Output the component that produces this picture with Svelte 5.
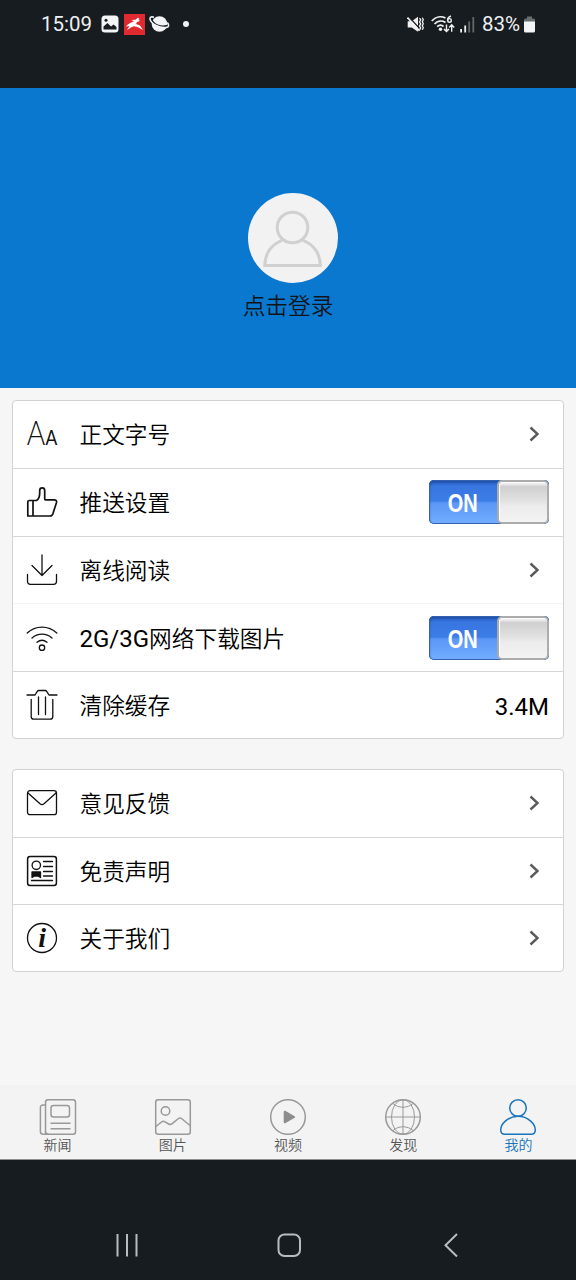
<script>
  let push = true;
  let mobileImages = true;
  let active = "me";

  const cacheSize = "3.4M";

  const groups = [
    [
      { icon: "font", text: "正文字号" },
      { icon: "thumb", text: "推送设置", toggle: "push" },
      { icon: "download", text: "离线阅读", faint: true },
      { icon: "wifi", prefix: "2G/3G", text: "网络下载图片", toggle: "images" },
      { icon: "trash", text: "清除缓存", value: cacheSize },
    ],
    [
      { icon: "mail", text: "意见反馈" },
      { icon: "card", text: "免责声明" },
      { icon: "info", text: "关于我们" },
    ],
  ];

  const tabs = [
    { key: "news", text: "新闻" },
    { key: "photo", text: "图片" },
    { key: "video", text: "视频" },
    { key: "find", text: "发现" },
    { key: "me", text: "我的" },
  ];

  $: states = { push, images: mobileImages };

  function flip(name) {
    if (name == "push") push = !push;
    else mobileImages = !mobileImages;
  }
</script>

<div class="phone">
  <div class="status">
    <div class="status-left">
      <span class="time">15:09</span>
      <svg class="gallery" width="18" height="18" viewBox="0 0 18 18">
        <rect x="0.5" y="0.5" width="17" height="17" rx="3.5" fill="#f2f4f5" />
        <path d="M2.5 14.500V11.500L6.500 8l3.500 3.500 2.500-2 3 2.500v2.500z" fill="#171c20" />
        <circle cx="5" cy="5.2" r="1.500" fill="#171c20" />
      </svg>
      <svg class="red" width="21" height="21" viewBox="0 0 21 21">
        <rect width="21" height="21" fill="#e12a30" />
        <path
          d="M2 12.500C4.500 9.500 7 8.200 10 7.500L7.500 6l4-.2L14 3.500l1.500 1.500-1 1 1.500 1-3 1-1 2 4 1.500 3 4.500-5.500-3-4-.8L7 13.500 3 16l2.500-4z"
          fill="#fff"
        />
      </svg>
      <svg class="planet" width="21" height="18" viewBox="0 0 21 18">
        <circle cx="10.500" cy="9" r="7.800" fill="#f2f4f5" />
        <path d="M2.500 4C4 9.500 12 13 18.500 10.500" stroke="#171c20" stroke-width="1.500" fill="none" />
        <path
          d="M5 2.200C2.500 1.500.8 2 1 4c.7 5 10 9.500 16.500 8.500 2.500-.4 2.700-2.500.8-5"
          stroke="#f2f4f5"
          stroke-width="1.600"
          fill="none"
        />
      </svg>
      <span class="dot"></span>
    </div>
    <div class="status-right">
      <svg width="17" height="17" viewBox="0 0 17 17" fill="none" stroke="#eef0f1" stroke-width="1.600">
        <path d="M.7 5.200h4L11 .8v15L4.700 11.500h-4z" fill="#eef0f1" stroke="none" />
        <path d="M1.500.5 13 13" stroke="#171c20" stroke-width="1.300" />
        <path d="M.5 1.500 12.500 14.800" />
        <path d="M12.500 2.200l1.200 1.700-1.200 2 1.200 2-1.200 2 1.200 2-1.200 2M15.300 1.700l1 2-1 2 1 2-1 2 1 2-1 2" stroke-width="1.300" />
      </svg>
      <svg class="wave" width="24" height="18" viewBox="0 0 24 18" fill="none" stroke="#eef0f1" stroke-width="1.800">
        <path d="M.8 6C4.500 1.800 10 .9 14.500 3M3.500 9c3-3.200 7.500-3.700 11-1.500M6.200 11.700c2-1.800 4.600-1.800 6.300-.2" />
        <circle cx="9.500" cy="14.200" r="1.700" fill="#eef0f1" stroke="none" />
        <path d="M20 1c-2.700 1-3.600 3-3.400 4.600" stroke-width="1.400" />
        <circle cx="18.500" cy="5.400" r="1.800" stroke-width="1.400" />
        <path d="M15.500 9.500v7M13 14l2.500 2.600 2.500-2.600M20.700 16.800V10M18.200 12.400l2.500-2.600 2.500 2.600" stroke-width="1.400" />
      </svg>
      <svg class="signal" width="15" height="17" viewBox="0 0 15 17">
        <path d="M.2 13h1.800v3.500H.2zM4.300 9.500h1.800v7H4.300z" fill="#eef0f1" />
        <path d="M8.300 5.500h1.800v11H8.300zM12.400 1h1.800v15.500h-1.800z" fill="#62676a" />
      </svg>
      <span class="percent">83%</span>
      <svg width="11" height="17" viewBox="0 0 11 17">
        <path d="M3 .5h5v2h1.500A1.500 1.500 0 0 1 11 4v3H0V4a1.500 1.500 0 0 1 1.500-1.500H3z" fill="#686d70" />
        <path d="M0 5.500h11v9.500a1.500 1.500 0 0 1-1.500 1.500h-8A1.500 1.500 0 0 1 0 15z" fill="#f2f4f5" />
      </svg>
    </div>
  </div>

  <div class="hero">
    <div class="avatar">
      <svg width="90" height="90" viewBox="0 0 90 90" fill="none" stroke="#d0d0d0" stroke-width="3">
        <circle cx="44.500" cy="34.500" r="15.300" />
        <path d="M34 47.300C23 51.500 16.800 61 16.800 72.500h55.500C72.300 61 66 51.500 55 47.300" />
      </svg>
    </div>
    <div class="login">点击登录</div>
  </div>

  <div class="content">
    {#each groups as group}
      <div class="group">
        {#each group as item}
          <div class="row" class:faint={item.faint}>
            <svg class="icon" width="32" height="32" viewBox="0 0 32 32">
              {#if item.icon == "font"}
                <text x="0.800" y="27.300" font-size="33" textLength="18.500" lengthAdjust="spacingAndGlyphs">A</text>
                <text class="small" x="19.400" y="27.300" font-size="21" textLength="11.800" lengthAdjust="spacingAndGlyphs">A</text>
              {:else if item.icon == "thumb"}
                <path
                  d="M7 14.500h3.500c2.500-1.500 3.200-4.500 3.200-7.500V4.500c0-3.500 5-3.500 5 0v8.300c0 .6.400 1 1 1h8.500c1.700 0 2.700 1 2.300 2.700L27 27.500c-.4 1.500-1.200 2.500-3 2.500H1.800V16c0-1 .5-1.500 1.500-1.500H7V30"
                  stroke-width="1.700"
                />
              {:else if item.icon == "download"}
                <path d="M16 1v20.500M6 11.500l10 10 10-10M1.500 20.500V27c0 2 1 3.300 3 3.300h23c2 0 3-1.300 3-3.300v-6.500" />
              {:else if item.icon == "wifi"}
                <path d="M1.200 11C9.500 3.200 22.500 3.200 30.800 11M6 16c5.800-5.200 14.200-5.200 20 0M11 20.300c3-2.500 7-2.500 10 0" />
                <circle cx="16" cy="25.700" r="2.700" />
              {:else if item.icon == "trash"}
                <path d="M1 6h8l2.300-3.700c.3-.5.700-.8 1.300-.8h6.800c.6 0 1 .3 1.300.8L23 6h8M5.200 10.500v17c0 2 .8 2.700 2.500 2.700h16.600c1.700 0 2.500-.8 2.500-2.700v-17M12.500 8v17.500M19.500 8v17.500" />
              {:else if item.icon == "mail"}
                <rect x="1.500" y="3.700" width="29" height="24" rx="2.500" />
                <path d="M2 6 14 16.800c1.400 1.200 2.600 1.200 4 0L30 6" />
              {:else if item.icon == "card"}
                <rect x="1.600" y="1.600" width="28.800" height="28.800" rx="2.500" stroke-width="1.500" />
                <circle cx="10.300" cy="10.300" r="4.200" />
                <path d="M6 17h8.500v5.500l-2.500-1.500h-3.500L6 22.500z" fill="#111" />
                <path d="M17.500 6.500h9M17.500 11.500h9M17.500 16.500h9M17.500 21h9M5.500 25.500h21" />
              {:else}
                <circle cx="16" cy="16" r="14.500" />
                <text class="serif" x="16.200" y="25.300" font-size="28" text-anchor="middle">i</text>
              {/if}
            </svg>
            <span class="label">
              {#if item.prefix}<span class="latin">{item.prefix}</span>{/if}{item.text}
            </span>
            {#if item.toggle}
              <button
                class="toggle"
                class:off={!states[item.toggle]}
                aria-label={item.text}
                on:click={() => flip(item.toggle)}
              >
                <span class="on"><span>{states[item.toggle] ? "ON" : "OFF"}</span></span>
                <span class="knob"></span>
              </button>
            {:else if item.value}
              <span class="value">{item.value}</span>
            {:else}
              <svg class="arrow" width="12" height="16" viewBox="0 0 12 16">
                <path d="M1.500 1.500 8.500 8l-7 6.500" />
              </svg>
            {/if}
          </div>
        {/each}
      </div>
    {/each}
  </div>

  <div class="tabs">
    {#each tabs as tab}
      <button class="tab" class:active={active == tab.key} on:click={() => (active = tab.key)}>
        <svg width="38" height="38" viewBox="0 0 38 38">
          {#if tab.key == "news"}
            <rect x="6.500" y="1.700" width="30" height="34.600" rx="2.500" />
            <path d="M6.500 7H4C2.300 7 1.400 8 1.400 9.500v24c0 1.800 1.200 2.800 3 2.800h5c-2 0-2.900-1-2.900-2.800" />
            <rect x="12" y="7.500" width="18.500" height="11.500" rx="2.500" />
            <path d="M11.500 25.200h20M11.500 30.800h20" />
          {:else if tab.key == "photo"}
            <rect x="1.700" y="1.700" width="34.600" height="34.600" rx="2.500" />
            <circle cx="11.500" cy="13" r="4.300" />
            <path d="M2 28.500 7.500 24c1.200-1 2.200-1 3.500-.2l3.700 2.200c1.300.8 2.300.7 3.500-.3l6.300-5.200c1-.8 2-.8 3 0l8.500 7" />
          {:else if tab.key == "video"}
            <circle cx="19" cy="19" r="17.300" />
            <path d="M14.700 14.200v9.600c0 1.400.8 1.900 2 1.200l8.500-4.900c1.200-.7 1.200-1.500 0-2.200L16.700 13c-1.200-.7-2-.2-2 1.200z" fill="#8d8d8d" stroke="none" />
          {:else if tab.key == "find"}
            <circle cx="19" cy="19" r="17.300" />
            <path d="M19 2v34M2 19h34M9 5.500c5.500 5 14.500 5 20 0M9 32.500c5.500-5 14.500-5 20 0" stroke-width="1" />
            <ellipse cx="19" cy="19" rx="11.500" ry="17.300" stroke-width="1" />
          {:else}
            <circle cx="19" cy="10" r="8.300" />
            <path d="M19 18.300C9 18.300 1.700 26 1.700 32c0 2.800 1.300 4.300 4.300 4.300h26c3 0 4.300-1.500 4.300-4.300C36.300 26 29 18.300 19 18.300z" />
          {/if}
        </svg>
        <span>{tab.text}</span>
      </button>
    {/each}
  </div>

  <div class="sysnav">
    <svg width="24" height="26" viewBox="0 0 24 26"><path d="M2.500 2v22.500M12 2v22.500M21.500 2v22.500" /></svg>
    <svg width="26" height="26" viewBox="0 0 26 26"><rect x="2.500" y="2.500" width="21.500" height="21.500" rx="6" /></svg>
    <svg width="26" height="26" viewBox="0 0 26 26"><path d="M19 2 7.500 13.200 19 24.500" /></svg>
  </div>
</div>

<style>
  :global(body) {
    background: #171c20;
  }
  .phone {
    display: flex;
    flex-direction: column;
    width: 576px;
    height: 1280px;
    overflow: hidden;
    background: #f6f6f6;
    color: #000;
    font-family: Roboto, "Noto Sans CJK SC", sans-serif;
  }
  svg {
    display: block;
    flex: none;
  }
  button {
    padding: 0;
    border: 0;
    background: none;
    font: inherit;
  }
  .status {
    display: flex;
    justify-content: space-between;
    box-sizing: border-box;
    height: 88px;
    padding: 0 41px 40px;
    background: #171c20;
    color: #eef0f1;
    font-size: 20px;
  }
  .status-left,
  .status-right {
    display: flex;
    align-items: center;
  }
  .time {
    width: 60px;
    font-size: 20.500px;
  }
  .red {
    margin: 0 4px 0 5px;
  }
  .dot {
    width: 6px;
    height: 6px;
    margin-left: 13px;
    border-radius: 50%;
    background: #eef0f1;
  }
  .wave {
    margin-left: 7px;
  }
  .signal {
    margin-left: 5px;
  }
  .percent {
    width: 42px;
    margin-left: 7px;
    font-size: 20.500px;
  }
  .hero {
    display: flex;
    flex-direction: column;
    align-items: center;
    box-sizing: border-box;
    height: 300px;
    padding-top: 105px;
    background: #0b78cf;
  }
  .avatar {
    width: 90px;
    height: 90px;
    margin-left: 9px;
    border-radius: 50%;
    background: #f2f2f2;
  }
  .login {
    margin-top: 8px;
    font-size: 22.700px;
    font-weight: 350;
    line-height: 32px;
    color: #10151b;
  }
  .content {
    flex: 1;
    padding: 12px 12px 0;
  }
  .group {
    margin-bottom: 30px;
    border: 1px solid #d2d2d2;
    border-radius: 4px;
    background: #fff;
  }
  .row {
    display: flex;
    align-items: center;
    box-sizing: border-box;
    height: 67.500px;
    padding: 0 14px 0 13px;
    border-bottom: 1px solid #d6d6d6;
  }
  .group:first-child .row {
    height: 67.800px;
  }
  .row.faint {
    border-color: #f5f5f5;
  }
  .group .row:last-child {
    height: 66px;
    border-bottom: 0;
  }
  .icon {
    margin-right: 21.500px;
    overflow: visible;
    fill: none;
    stroke: #111;
    stroke-width: 1.300;
    stroke-linejoin: round;
    stroke-linecap: round;
  }
  .icon text {
    fill: #111;
    stroke: none;
    font-family: Lato, sans-serif;
    font-weight: 300;
  }
  .icon .small {
    font-weight: 400;
  }
  .icon .serif {
    font-family: "Liberation Serif", serif;
    font-weight: bold;
    font-style: italic;
  }
  .label {
    flex: 1;
    padding-top: 4px;
    font-size: 22.700px;
    font-weight: 350;
    line-height: 32px;
  }
  .latin {
    font-size: 24px;
    font-weight: 400;
  }
  .value {
    padding-top: 3px;
    font-size: 24px;
  }
  .arrow {
    margin-right: 8px;
    fill: none;
    stroke: #5b5b5b;
    stroke-width: 2.400;
  }
  .toggle {
    display: flex;
    box-sizing: border-box;
    width: 120px;
    height: 44px;
    overflow: hidden;
    border-radius: 5px;
    background: linear-gradient(#3672dc, #3c7de8 48%, #5b98f6 52%, #72adff);
    box-shadow:
      inset 0 0 0 1px #3462ae,
      inset 0 3px 3px #1d4ea5;
  }
  .toggle.off {
    flex-direction: row-reverse;
    background: #ddd;
  }
  .on {
    width: 68px;
    color: #fff;
    font: bold 25px/47px "Liberation Sans", sans-serif;
  }
  .on span {
    display: inline-block;
    transform: scaleX(0.800);
  }
  .knob {
    flex: 1;
    border: 2px solid #acacac;
    border-radius: 5px;
    background: linear-gradient(#fff, #cfcfcf 12%, #e2e2e2 48%, #ececec 60%, #f3f3f3);
    box-shadow: inset 1px 0 1px #fff;
  }
  .tabs {
    display: flex;
    box-sizing: border-box;
    height: 75px;
    padding-top: 13px;
    border-bottom: 1px solid #8c8f90;
    background: #f3f3f3;
  }
  .tab {
    display: flex;
    flex: 1;
    flex-direction: column;
    align-items: center;
    color: #555;
    font-size: 14px;
    font-weight: 350;
    line-height: 19px;
  }
  .tab svg {
    fill: none;
    stroke: #999;
    stroke-width: 1.500;
  }
  .tab.active {
    color: #1875bd;
  }
  .tab.active svg {
    stroke: #1875bd;
  }
  .sysnav {
    display: flex;
    justify-content: space-between;
    box-sizing: border-box;
    height: 120px;
    padding: 72px 112px 0 115px;
    background: #171c20;
  }
  .sysnav svg {
    fill: none;
    stroke: #b9bcbe;
    stroke-width: 2;
  }
</style>
